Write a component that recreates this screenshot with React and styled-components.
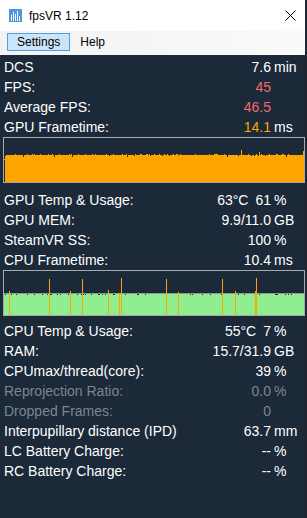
import React from "react";
import styled, { createGlobalStyle } from "styled-components";

const GlobalStyle = createGlobalStyle`
    html, body {
        margin: 0;
        padding: 0;
        background: #1c2939;
    }
`

const Page = styled.div`
    width: 307px;
    height: 518px;
    display: flex;
    overflow: hidden;
    font-family: "Liberation Sans", Arial, sans-serif;
`

const Window = styled.div`
    width: 305px;
    display: flex;
    flex-direction: column;
    background: #1c2939;
`

const DesktopEdge = styled.div`
    width: 2px;
    background: #1f2632;
`

const TitleBar = styled.div`
    height: 31px;
    background: #ffffff;
    display: flex;
    align-items: center;
    padding-left: 9px;
    padding-right: 9px;
    font-size: 12px;
    color: #000;
`

const Title = styled.div`
    flex: 1;
    margin-left: 7px;
`

const MenuBar = styled.div`
    height: 24px;
    background: linear-gradient(to right, #f2f2f2, #fafafa);
    display: flex;
    align-items: flex-start;
    padding: 2px 0 0 7px;
    box-sizing: border-box;
    font-size: 12px;
`

const MenuItem = styled.div`
    height: 18px;
    box-sizing: border-box;
    padding: 0 9px;
    display: flex;
    align-items: center;
    border: 1px solid ${(p) => (p.$active ? "#4f9fe6" : "transparent")};
    background: ${(p) => (p.$active ? "#cce4f7" : "transparent")};
    color: #000;
`

const Body = styled.div`
    flex: 1;
    padding-top: 2px;
    display: flex;
    flex-direction: column;
`

const Row = styled.div`
    height: 20px;
    display: grid;
    grid-template-columns: 1fr auto 28px;
    column-gap: 3px;
    align-items: center;
    padding: 0 3px 0 4px;
    font-size: 14px;
    line-height: 20px;
    color: ${(p) => (p.$dim ? "#7d8590" : "#ffffff")};
    white-space: nowrap;
`

const Num = styled.div`
    text-align: right;
    display: flex;
    gap: 7px;
    justify-content: flex-end;
    color: ${(p) => p.$color || "inherit"};
`

const Unit = styled.div`
    text-align: left;
`

const ChartBox = styled.div`
    margin: ${(p) => p.$margin};
    margin-left: 3px;
    width: 302px;
    height: 46px;
    box-sizing: border-box;
    border: 1px solid #a6a9ad;
    background: #1c2939;
    display: flex;
`

const AppIcon = () => (
    <svg width="13" height="13" viewBox="0 0 13 13" shapeRendering="crispEdges">
        <rect x="0" y="0" width="13" height="13" fill="#4b97e0" />
        <rect x="2" y="6" width="1" height="6" fill="#ffffff" />
        <rect x="4" y="3" width="1" height="9" fill="#ffffff" />
        <rect x="6" y="5" width="1" height="7" fill="#ffffff" />
        <rect x="8" y="2" width="1" height="10" fill="#ffffff" />
        <rect x="10" y="7" width="1" height="5" fill="#ffffff" />
    </svg>
)

const CloseIcon = () => (
    <svg width="11" height="11" viewBox="0 0 11 11">
        <path d="M0.5 0.5 L10.5 10.5 M10.5 0.5 L0.5 10.5" stroke="#000" strokeWidth="1" />
    </svg>
)

// small deterministic noise so the bars look like real samples
const noise = (i, seed) => {
    const v = Math.sin(i * 12.9898 + seed * 78.233) * 43758.5453;
    return v - Math.floor(v);
}

const gpuTops = Array.from({length: 300}, (_, i) => {
    if (i === 236) return 12;
    if (i === 298) return 13;
    if (i === 254) return 14;
    const r = noise(i, 1);
    if (r < 0.18) return 16;
    if (r < 0.22) return 18;
    if (r > 0.985) return 19;
    return 17;
})

const GpuChart = () => (
    <svg width="300" height="44" viewBox="0 0 300 44" shapeRendering="crispEdges">
        <rect x="0" y="21" width="300" height="1" fill="#9aa0a6" />
        {gpuTops.map((t, i) => (
            <rect key={i} x={i + 1} y={t} width="1" height={44 - t} fill="#ffa500" />
        ))}
    </svg>
)

const cpuTops = Array.from({length: 300}, (_, i) => {
    const r = noise(i, 7);
    if (r < 0.12) return 24;
    return 23;
})

const cpuSpikes = [
    [5, 20], [45, 8], [66, 20], [78, 8], [104, 19], [115, 22], [117, 7],
    [162, 8], [174, 21], [218, 8], [231, 20], [251, 20], [252, 7],
]

const CpuChart = () => (
    <svg width="300" height="44" viewBox="0 0 300 44" shapeRendering="crispEdges">
        {cpuTops.map((t, i) => (
            <rect key={i} x={i} y={t} width="1" height={44 - t} fill="#90ee90" />
        ))}
        <rect x="0" y="22" width="300" height="1" fill="#8d9a92" />
        {cpuSpikes.map(([x, y]) => (
            <rect key={x} x={x} y={y} width="1" height={44 - y} fill="#ffa500" />
        ))}
    </svg>
)

const Stat = ({label, num, unit, color, dim}) => (
    <Row $dim={dim}>
        <div>{label}</div>
        <Num $color={color}>
            {Array.isArray(num) ? num.map((n) => <span key={n}>{n}</span>) : num}
        </Num>
        <Unit>{unit}</Unit>
    </Row>
)

const App = () => {
    return (
        <Page>
            <GlobalStyle />
            <Window>
                <TitleBar>
                    <AppIcon />
                    <Title>fpsVR 1.12</Title>
                    <CloseIcon />
                </TitleBar>
                <MenuBar>
                    <MenuItem $active>Settings</MenuItem>
                    <MenuItem>Help</MenuItem>
                </MenuBar>
                <Body>
                    <Stat label="DCS" num="7.6" unit="min" />
                    <Stat label="FPS:" num="45" color="#f26d6d" />
                    <Stat label="Average FPS:" num="46.5" color="#f26d6d" />
                    <Stat label="GPU Frametime:" num="14.1" unit="ms" color="#ffa500" />
                    <ChartBox $margin="0 0 7px">
                        <GpuChart />
                    </ChartBox>
                    <Stat label="GPU Temp & Usage:" num={["63°C", "61"]} unit="%" />
                    <Stat label="GPU MEM:" num="9.9/11.0" unit="GB" />
                    <Stat label="SteamVR SS:" num="100" unit="%" />
                    <Stat label="CPU Frametime:" num="10.4" unit="ms" />
                    <ChartBox $margin="0 0 5px">
                        <CpuChart />
                    </ChartBox>
                    <Stat label="CPU Temp & Usage:" num={["55°C", "7"]} unit="%" />
                    <Stat label="RAM:" num="15.7/31.9" unit="GB" />
                    <Stat label="CPUmax/thread(core):" num="39" unit="%" />
                    <Stat label="Reprojection Ratio:" num="0.0" unit="%" dim />
                    <Stat label="Dropped Frames:" num="0" dim />
                    <Stat label="Interpupillary distance (IPD)" num="63.7" unit="mm" />
                    <Stat label="LC Battery Charge:" num="--" unit="%" />
                    <Stat label="RC Battery Charge:" num="--" unit="%" />
                </Body>
            </Window>
            <DesktopEdge />
        </Page>
    )
}

export default App;
